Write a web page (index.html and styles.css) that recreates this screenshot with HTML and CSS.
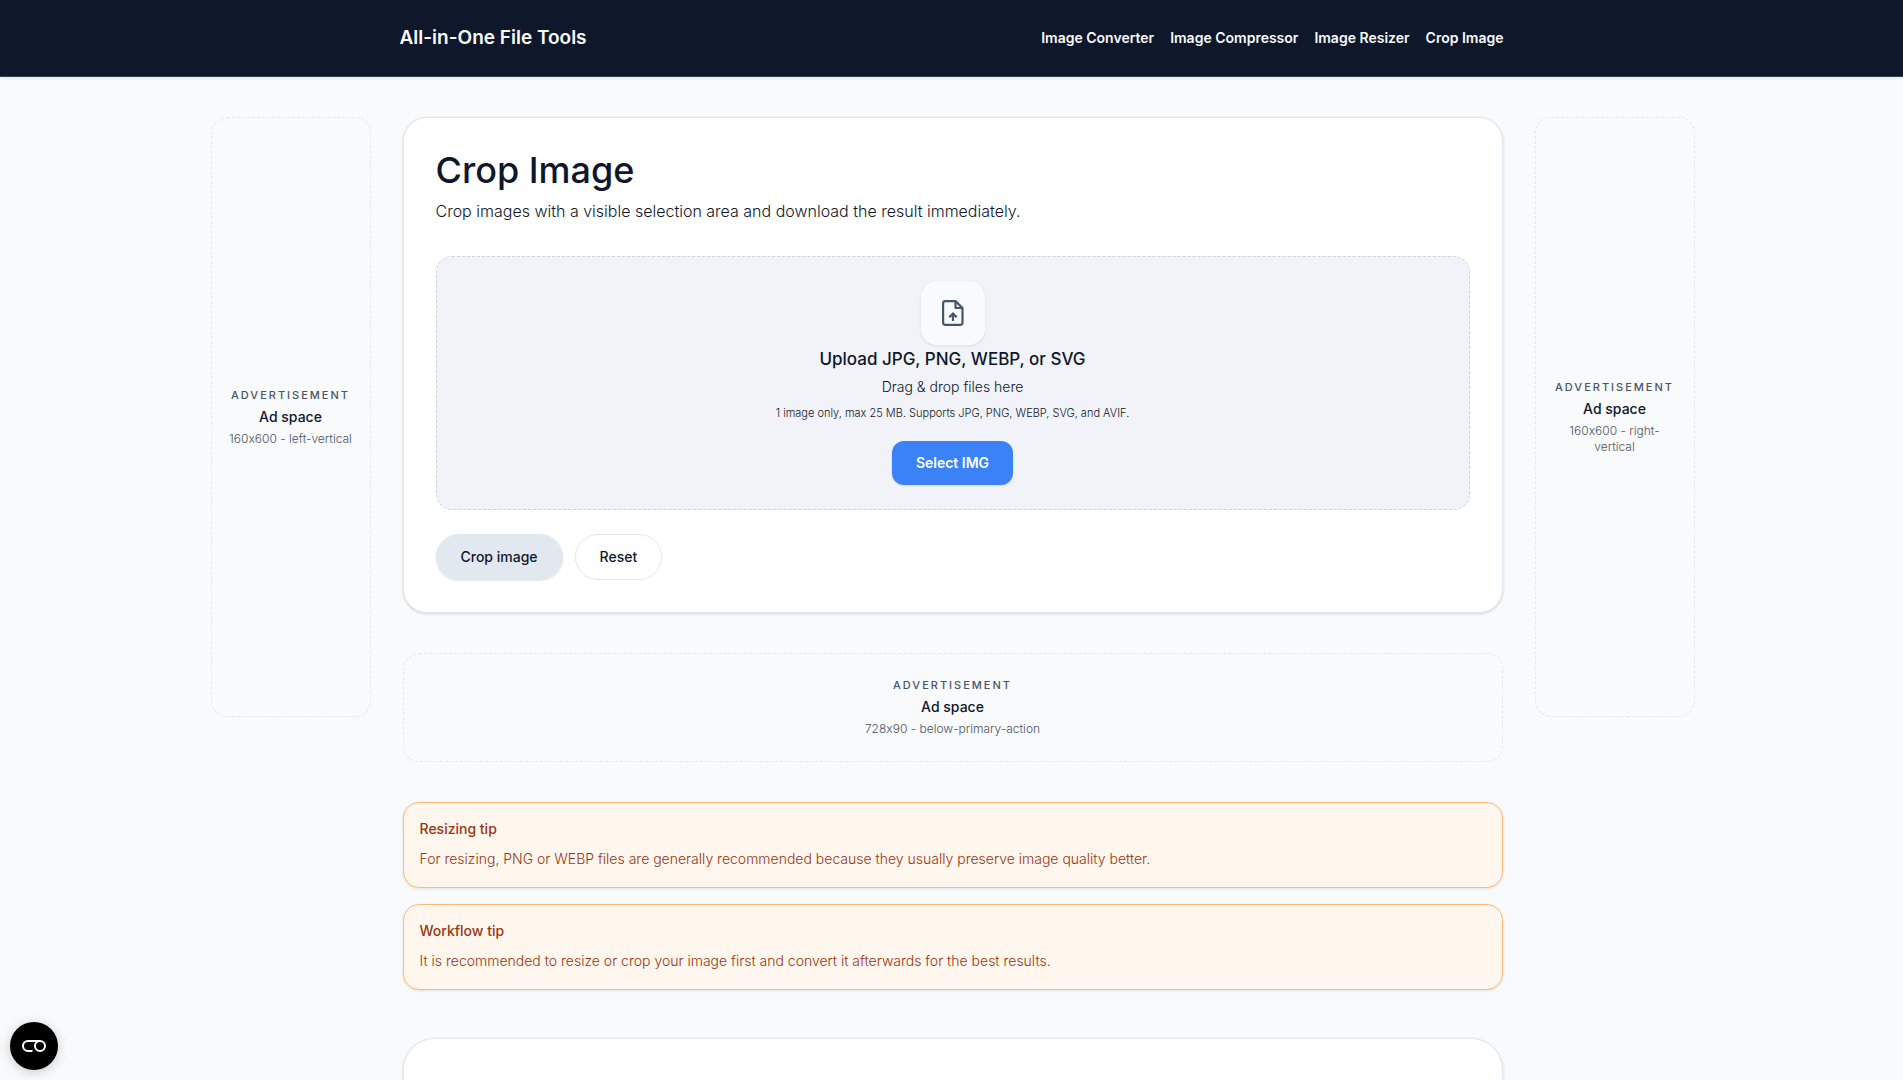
FILE: index.html
```html
<!DOCTYPE html>
<html lang="en">
<head>
  <meta charset="UTF-8">
  <meta name="viewport" content="width=device-width, initial-scale=1">
  <title>Crop Image - All-in-One File Tools</title>
  <link rel="stylesheet" href="styles.css">
</head>
<body>

  <header class="site-header">
    <div class="header-inner">
      <a class="brand" href="#">All-in-One File Tools</a>
      <nav class="nav">
        <a href="#">Image Converter</a>
        <a href="#">Image Compressor</a>
        <a href="#">Image Resizer</a>
        <a href="#">Crop Image</a>
      </nav>
    </div>
  </header>

  <div class="layout">
    <aside class="ad ad-vertical">
      <p class="ad-label">Advertisement</p>
      <p class="ad-title">Ad space</p>
      <p class="ad-size">160x600 - left-vertical</p>
    </aside>

    <main class="content">
      <section class="card">
        <h1>Crop Image</h1>
        <p class="lead">Crop images with a visible selection area and download the result immediately.</p>

        <div class="dropzone">
          <div class="upload-icon">
            <svg viewBox="0 0 32 32" width="32" height="32" fill="none" stroke="currentColor" stroke-width="2.200" stroke-linejoin="round" aria-hidden="true">
              <path d="M18.500 4.100H8.400a2.300 2.300 0 0 0-2.300 2.300v19.200a2.300 2.300 0 0 0 2.300 2.300h14.800a2.300 2.300 0 0 0 2.300-2.300V11z"/>
              <path d="M18.500 4.100V11h7"/>
              <path d="M16 24v-7.500M12.300 20.300l3.700-3.700 3.700 3.700" stroke-linejoin="miter"/>
            </svg>
          </div>
          <p class="drop-title">Upload JPG, PNG, WEBP, or SVG</p>
          <p class="drop-text">Drag &amp; drop files here</p>
          <p class="drop-hint">1 image only, max 25 MB. Supports JPG, PNG, WEBP, SVG, and AVIF.</p>
          <button type="button" class="select-btn">Select IMG</button>
        </div>

        <div class="actions">
          <button type="button" class="pill pill-primary">Crop image</button>
          <button type="button" class="pill">Reset</button>
        </div>
      </section>

      <aside class="ad ad-horizontal">
        <p class="ad-label">Advertisement</p>
        <p class="ad-title">Ad space</p>
        <p class="ad-size">728x90 - below-primary-action</p>
      </aside>

      <div class="tips">
        <section class="tip">
          <h2>Resizing tip</h2>
          <p>For resizing, PNG or WEBP files are generally recommended because they usually preserve image quality better.</p>
        </section>
        <section class="tip">
          <h2>Workflow tip</h2>
          <p>It is recommended to resize or crop your image first and convert it afterwards for the best results.</p>
        </section>
      </div>

      <section class="card card-next"></section>
    </main>

    <aside class="ad ad-vertical">
      <p class="ad-label">Advertisement</p>
      <p class="ad-title">Ad space</p>
      <p class="ad-size">160x600 - right-vertical</p>
    </aside>
  </div>

  <button type="button" class="consent-btn" aria-label="Privacy settings">
    <svg viewBox="0 0 26 14" width="26" height="14" fill="none" stroke="currentColor" stroke-width="2" aria-hidden="true">
      <path d="M19 2H7a5 5 0 0 0 0 10h4.500"/>
      <circle cx="19" cy="7" r="5"/>
    </svg>
  </button>

</body>
</html>
```
FILE: styles.css
```css
* {
  box-sizing: border-box;
}
body {
  margin: 0;
  font-family: Inter, "Open Sans", sans-serif;
  font-size: 16px;
  font-weight: 300;
  font-variant-ligatures: no-contextual;
  color: #0f172a;
  background-color: #f8fafc;
}
h1, h2, p {
  margin: 0;
}
button {
  font-family: inherit;
  cursor: pointer;
}

/* header */
.site-header {
  background-color: #0f172a;
  border-bottom: 1px solid #334155;
  box-shadow: 0 1px 3px rgba(0, 0, 0, 0.1);
}
.header-inner {
  display: flex;
  align-items: center;
  justify-content: space-between;
  max-width: 1152px;
  min-height: 76px;
  margin: 0 auto;
  padding: 16px 24px;
}
.site-header a {
  color: #f8fafc;
  text-decoration: none;
}
.brand {
  font-size: 19px;
  font-weight: 600;
  line-height: 28px;
}
.nav {
  display: flex;
  gap: 16px;
  font-size: 14px;
  font-weight: 600;
  line-height: 20px;
}

/* page columns */
.layout {
  display: grid;
  grid-template-columns: 160px minmax(0, 1fr) 160px;
  align-items: start;
  gap: 32px;
  max-width: 1486px;
  margin: 0 auto;
  padding: 40px 0 40px 2px;
}
.content {
  display: grid;
  gap: 40px;
}

/* ad slots */
.ad {
  display: flex;
  flex-direction: column;
  align-items: center;
  justify-content: center;
  gap: 4px;
  border: 1px dashed #e2e8f0;
  border-radius: 16px;
  text-align: center;
}
.ad-vertical {
  min-height: 600px;
  padding: 16px;
}
.ad-horizontal {
  padding: 24px 16px;
}
.ad-label {
  font-size: 11px;
  font-weight: 500;
  line-height: 15px;
  letter-spacing: 2px;
  text-transform: uppercase;
  color: #4b5563;
}
.ad-title {
  font-size: 14px;
  font-weight: 500;
  line-height: 20px;
}
.ad-size {
  font-size: 12px;
  line-height: 16px;
  color: #4b5563;
}

/* cards */
.card {
  padding: 32px;
  background-color: #fff;
  border: 1px solid #e2e8f0;
  border-radius: 24px;
  box-shadow: 0 1px 3px rgba(15, 23, 42, 0.16);
}
.card-next {
  min-height: 320px;
  margin-top: 8px;
  border-radius: 32px;
}
.card h1 {
  font-size: 36px;
  font-weight: 500;
  line-height: 40px;
}
.lead {
  margin-top: 8px;
  line-height: 26px;
}

/* upload area */
.dropzone {
  display: flex;
  flex-direction: column;
  align-items: center;
  margin-top: 32px;
  padding: 24px;
  background-color: #f1f3f8;
  border: 1px dashed #cbd5e1;
  border-radius: 16px;
  text-align: center;
}
.upload-icon {
  display: flex;
  align-items: center;
  justify-content: center;
  width: 64px;
  height: 64px;
  color: #475569;
  background-color: #f8fafc;
  border-radius: 16px;
  box-shadow: 0 1px 3px rgba(0, 0, 0, 0.1);
}
.drop-title {
  font-size: 17px;
  font-weight: 500;
  line-height: 28px;
}
.drop-text {
  margin-top: 4px;
  font-size: 14px;
  line-height: 20px;
}
.drop-hint {
  margin-top: 8px;
  font-size: 11px;
  line-height: 16px;
}
.select-btn {
  margin-top: 20px;
  padding: 12px 24px;
  border: none;
  border-radius: 12px;
  font-size: 14px;
  font-weight: 600;
  line-height: 20px;
  color: #fff;
  background-color: #3b82f6;
  box-shadow: 0 1px 2px rgba(0, 0, 0, 0.1);
}
.actions {
  display: flex;
  gap: 12px;
  margin-top: 24px;
}
.pill {
  padding: 12px 24px;
  border: 1px solid #e2e8f0;
  border-radius: 24px;
  font-size: 14px;
  font-weight: 500;
  line-height: 20px;
  color: #0f172a;
  background-color: #fff;
}
.pill-primary {
  background-color: #e2e8f0;
  box-shadow: 0 1px 2px rgba(0, 0, 0, 0.1);
}

/* tips */
.tips {
  display: grid;
  gap: 16px;
}
.tip {
  padding: 16px;
  color: #9a3412;
  background-color: #fff7ed;
  border: 1px solid #fdba74;
  border-radius: 16px;
  box-shadow: 0 1px 3px rgba(0, 0, 0, 0.1);
}
.tip h2 {
  font-size: 14px;
  font-weight: 500;
  line-height: 20px;
}
.tip p {
  margin-top: 8px;
  font-size: 14px;
  line-height: 24px;
}

/* floating privacy button */
.consent-btn {
  position: fixed;
  left: 10px;
  bottom: 10px;
  display: flex;
  align-items: center;
  justify-content: center;
  width: 48px;
  height: 48px;
  padding: 0;
  border: none;
  border-radius: 50%;
  color: #fff;
  background-color: #000;
  box-shadow: 0 2px 12px rgba(0, 0, 0, 0.2);
}
```
